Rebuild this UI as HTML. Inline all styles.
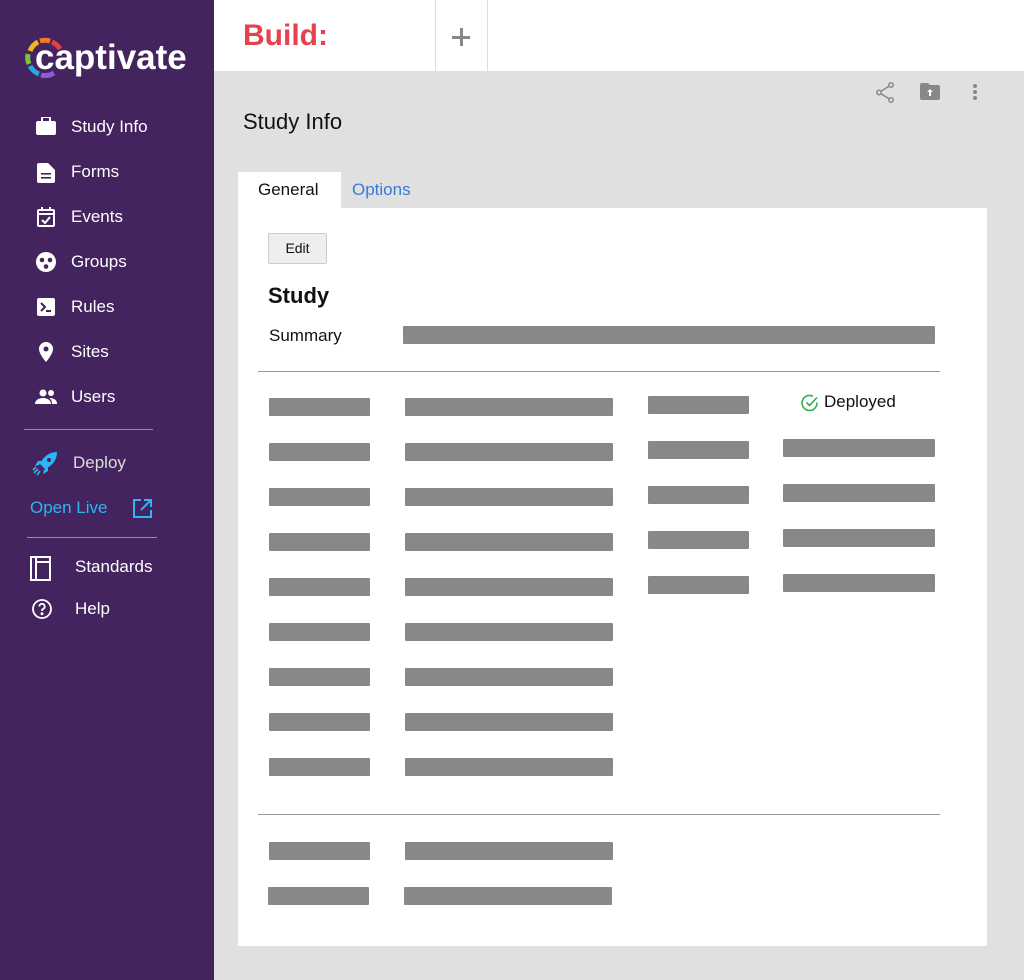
<!DOCTYPE html>
<html><head><style>
*{margin:0;padding:0;box-sizing:border-box}
body{width:1024px;height:980px;position:relative;background:#e0e0e0;font-family:"Liberation Sans",sans-serif;overflow:hidden}
.a{position:absolute}
.side{left:0;top:0;width:214px;height:980px;background:#44245e}
.nav{position:absolute;color:#fff;font-size:17px;line-height:20px}
.ic{position:absolute}
.b{position:absolute;background:#888;height:18px;border-radius:1px}
</style></head><body>
<div class="a side">
  <svg class="ic" style="left:24px;top:37px" width="42" height="42" viewBox="0 0 42 42" fill="none" stroke-width="5">
    <path d="M6 14 A17 17 0 0 1 14 5" stroke="#f2b51c"/>
    <path d="M16 4 A17 17 0 0 1 26 4" stroke="#f47b20"/>
    <path d="M28 5 A17 17 0 0 1 36 12" stroke="#e8413c"/>
    <path d="M4 17 A17 17 0 0 0 5 27" stroke="#7cc242"/>
    <path d="M6 29 A17 17 0 0 0 15 37" stroke="#29a8e0"/>
    <path d="M17 38 A17 17 0 0 0 30 36" stroke="#8e5bd6"/>
  </svg>
  <div class="nav" style="left:35px;top:38px;font-size:35px;line-height:40px;font-weight:bold">captivate</div>
  <svg class="ic" style="left:36px;top:117px" width="20" height="18" viewBox="0 0 20 18"><rect x="0" y="4" width="20" height="14" rx="2" fill="#fff"/><rect x="6" y="0" width="8" height="6" rx="1" fill="none" stroke="#fff" stroke-width="2"/></svg>
  <div class="nav" style="left:71px;top:117px">Study Info</div>
  <svg class="ic" style="left:37px;top:163px" width="18" height="20" viewBox="0 0 18 20"><path d="M0 2a2 2 0 0 1 2-2h9l7 7v11a2 2 0 0 1-2 2H2a2 2 0 0 1-2-2z" fill="#fff"/><rect x="4" y="10" width="10" height="1.6" fill="#44245e"/><rect x="4" y="14" width="10" height="1.6" fill="#44245e"/></svg>
  <div class="nav" style="left:71px;top:162px">Forms</div>
  <svg class="ic" style="left:37px;top:207px" width="18" height="20" viewBox="0 0 18 20" fill="none" stroke="#fff" stroke-width="2"><rect x="1" y="3" width="16" height="16" rx="1"/><path d="M1 7h16M5 0v4M13 0v4M5 13l3 3 5-6"/></svg>
  <div class="nav" style="left:71px;top:207px">Events</div>
  <svg class="ic" style="left:36px;top:252px" width="20" height="20" viewBox="0 0 20 20"><circle cx="10" cy="10" r="10" fill="#fff"/><circle cx="6" cy="8" r="2.3" fill="#44245e"/><circle cx="14" cy="8" r="2.3" fill="#44245e"/><circle cx="10" cy="14.5" r="2.3" fill="#44245e"/></svg>
  <div class="nav" style="left:71px;top:252px">Groups</div>
  <svg class="ic" style="left:37px;top:298px" width="18" height="18" viewBox="0 0 18 18"><rect width="18" height="18" rx="2" fill="#fff"/><path d="M4 5l4 4-4 4" stroke="#44245e" stroke-width="2" fill="none"/><rect x="9" y="12" width="5" height="2" fill="#44245e"/></svg>
  <div class="nav" style="left:71px;top:297px">Rules</div>
  <svg class="ic" style="left:38px;top:342px" width="16" height="20" viewBox="0 0 16 20"><path d="M8 0a7 7 0 0 1 7 7c0 5-7 13-7 13S1 12 1 7a7 7 0 0 1 7-7z" fill="#fff"/><circle cx="8" cy="7" r="2.5" fill="#44245e"/></svg>
  <div class="nav" style="left:71px;top:342px">Sites</div>
  <svg class="ic" style="left:35px;top:389px" width="22" height="16" viewBox="0 0 22 16" fill="#fff"><circle cx="8" cy="4" r="3.5"/><path d="M0 15c0-4 4-6 8-6s8 2 8 6z"/><circle cx="16" cy="4" r="3"/><path d="M14 9c4 0 8 1 8 6h-5c0-3-1-5-3-6z"/></svg>
  <div class="nav" style="left:71px;top:387px">Users</div>
  <div class="a" style="left:24px;top:429px;width:129px;height:1px;background:#9a86aa"></div>
  <svg class="ic" style="left:31px;top:451px" width="28" height="26" viewBox="0 0 28 26"><path d="M26 1C18 1 12 6 9 13l5 5c7-3 12-9 12-17z" fill="#29b6f6"/><circle cx="18" cy="9" r="2" fill="#44245e"/><path d="M8 14l-4 1 3-5h4zM13 19l-1 4 5-3v-4z" fill="#29b6f6"/><path d="M7 18l-4 4M9 20l-3 4M5 16l-3 3" stroke="#29b6f6" stroke-width="1.6"/></svg>
  <div class="nav" style="left:73px;top:453px;color:#ddd">Deploy</div>
  <div class="nav" style="left:30px;top:498px;color:#29b6f6">Open Live</div>
  <svg class="ic" style="left:133px;top:499px" width="19" height="19" viewBox="0 0 19 19" fill="none" stroke="#29b6f6" stroke-width="2"><path d="M8 1H1v17h17v-7M11 1h7v7M18 1L8 11"/></svg>
  <div class="a" style="left:27px;top:537px;width:130px;height:1px;background:#9a86aa"></div>
  <svg class="ic" style="left:30px;top:556px" width="21" height="25" viewBox="0 0 21 25" fill="none" stroke="#fff" stroke-width="2"><rect x="1" y="1" width="19" height="23"/><path d="M6 1v23M6 6h14"/></svg>
  <div class="nav" style="left:75px;top:557px">Standards</div>
  <svg class="ic" style="left:32px;top:599px" width="20" height="20" viewBox="0 0 20 20" fill="none" stroke="#fff" stroke-width="1.8"><circle cx="10" cy="10" r="9"/><path d="M7.3 7.5a2.7 2.7 0 1 1 3.7 2.5c-1 .4-1 1-1 2"/><circle cx="10" cy="14.8" r=".6" fill="#fff"/></svg>
  <div class="nav" style="left:75px;top:599px">Help</div>
</div>

<div class="a" style="left:214px;top:0;width:810px;height:71px;background:#fff"></div>
<div class="a" style="left:243px;top:19px;font-size:30px;font-weight:bold;color:#e5424d;line-height:34px">Build:</div>
<div class="a" style="left:435px;top:0;width:1px;height:71px;background:#ddd"></div>
<div class="a" style="left:487px;top:0;width:1px;height:71px;background:#ddd"></div>
<div class="a" style="left:452px;top:36px;width:18px;height:3px;background:#888"></div>
<div class="a" style="left:459.5px;top:28px;width:3px;height:18px;background:#888"></div>

<svg class="a" style="left:875px;top:82px" width="20" height="21" viewBox="0 0 20 21" fill="none" stroke="#888" stroke-width="1.5"><circle cx="16" cy="3" r="2.2"/><circle cx="4" cy="10.5" r="2.2"/><circle cx="16" cy="18" r="2.2"/><path d="M6 9.3l8-5M6 11.7l8 5"/></svg>
<svg class="a" style="left:920px;top:83px" width="20" height="17" viewBox="0 0 20 17"><path d="M0 2a2 2 0 0 1 2-2h6l2 2h8a2 2 0 0 1 2 2v11a2 2 0 0 1-2 2H2a2 2 0 0 1-2-2z" fill="#888"/><path d="M10 6l-3 3h2v4h2V9h2z" fill="#fff"/></svg>
<div class="a" style="left:973px;top:84px;width:4px;height:4px;border-radius:2px;background:#888;box-shadow:0 6px 0 #888,0 12px 0 #888"></div>

<div class="a" style="left:243px;top:109px;font-size:22px;line-height:26px;color:#111">Study Info</div>
<div class="a" style="left:238px;top:172px;width:103px;height:37px;background:#fff"></div>
<div class="a" style="left:258px;top:180px;font-size:17px;color:#111">General</div>
<div class="a" style="left:352px;top:180px;font-size:17px;color:#3a7bd5">Options</div>
<div class="a" style="left:238px;top:208px;width:749px;height:738px;background:#fff"></div>
<div class="a" style="left:268px;top:233px;width:59px;height:31px;background:#eee;border:1px solid #ccc;border-radius:2px;font-size:14px;line-height:29px;text-align:center;color:#111">Edit</div>
<div class="a" style="left:268px;top:283px;font-size:22px;font-weight:bold;color:#111">Study</div>
<div class="a" style="left:269px;top:326px;font-size:17px;color:#111">Summary</div>
<div class="b" style="left:403px;top:326px;width:532px"></div>
<div class="a" style="left:258px;top:371px;width:682px;height:1px;background:#999"></div>
<div class="a" style="left:258px;top:814px;width:682px;height:1px;background:#999"></div>

<div class="b" style="left:269px;top:398px;width:101px"></div><div class="b" style="left:405px;top:398px;width:208px"></div>
<div class="b" style="left:269px;top:443px;width:101px"></div><div class="b" style="left:405px;top:443px;width:208px"></div>
<div class="b" style="left:269px;top:488px;width:101px"></div><div class="b" style="left:405px;top:488px;width:208px"></div>
<div class="b" style="left:269px;top:533px;width:101px"></div><div class="b" style="left:405px;top:533px;width:208px"></div>
<div class="b" style="left:269px;top:578px;width:101px"></div><div class="b" style="left:405px;top:578px;width:208px"></div>
<div class="b" style="left:269px;top:623px;width:101px"></div><div class="b" style="left:405px;top:623px;width:208px"></div>
<div class="b" style="left:269px;top:668px;width:101px"></div><div class="b" style="left:405px;top:668px;width:208px"></div>
<div class="b" style="left:269px;top:713px;width:101px"></div><div class="b" style="left:405px;top:713px;width:208px"></div>
<div class="b" style="left:269px;top:758px;width:101px"></div><div class="b" style="left:405px;top:758px;width:208px"></div>

<div class="b" style="left:648px;top:396px;width:101px"></div>
<div class="b" style="left:648px;top:441px;width:101px"></div><div class="b" style="left:783px;top:439px;width:152px"></div>
<div class="b" style="left:648px;top:486px;width:101px"></div><div class="b" style="left:783px;top:484px;width:152px"></div>
<div class="b" style="left:648px;top:531px;width:101px"></div><div class="b" style="left:783px;top:529px;width:152px"></div>
<div class="b" style="left:648px;top:576px;width:101px"></div><div class="b" style="left:783px;top:574px;width:152px"></div>
<svg class="a" style="left:801px;top:394px" width="18" height="18" viewBox="0 0 18 18" fill="none" stroke="#2bb24c" stroke-width="1.6"><path d="M16 8.5A7.5 7.5 0 1 1 12 2.3"/><path d="M5.5 8.5l3 3L16 3.5"/></svg>
<div class="a" style="left:824px;top:392px;font-size:17px;color:#111">Deployed</div>

<div class="b" style="left:269px;top:842px;width:101px"></div><div class="b" style="left:405px;top:842px;width:208px"></div>
<div class="b" style="left:268px;top:887px;width:101px"></div><div class="b" style="left:404px;top:887px;width:208px"></div>
</body></html>
